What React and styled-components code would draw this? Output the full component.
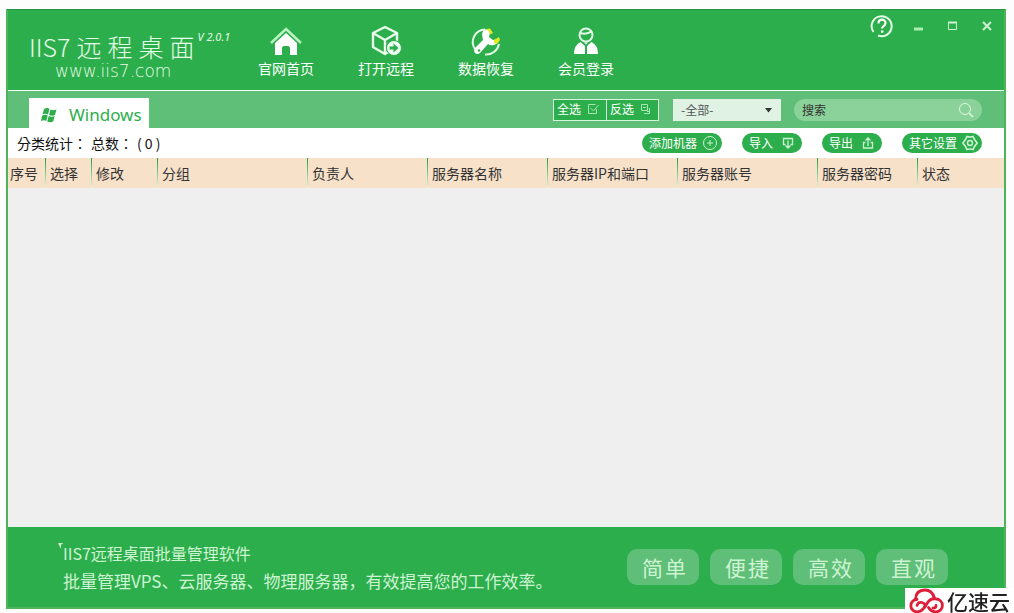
import React from 'react';
import styled, { createGlobalStyle } from 'styled-components';

const green = '#2dae4c';
const midGreen = '#5fbe77';
const paleGreen = '#cdf3d3';

const GlobalStyle = createGlobalStyle`
  * { box-sizing: border-box; }
  html, body, #root { height: 100%; }
  body {
    margin: 0;
    overflow: hidden;
    background: #fdfdfd;
    color: #222;
    font: 14px/20px "Noto Sans CJK SC", sans-serif;
  }
  button, input, select { font: inherit; color: inherit; margin: 0; }
  button { border: 0; padding: 0; background: none; cursor: pointer; }
`;

const Page = styled.div`
  height: 100%;
  padding: 9px 8px 4px 6px;
`;

const Window = styled.main`
  height: 100%;
  display: flex;
  flex-direction: column;
  border: 2px solid #4db45c;
  border-top: 1px solid #27903c;
  background: #efefef;
`;

const Header = styled.header`
  display: flex;
  height: 81px;
  flex: none;
  background: ${green};
  border-bottom: 1px solid #f2fff4;
  color: #fff;
`;

const Brand = styled.a`
  width: 228px;
  padding: 20px 0 0 21px;
  color: #e4fbe7;
  text-decoration: none;
`;

const BrandTop = styled.div`
  display: flex;
  align-items: flex-start;
`;

const BrandName = styled.span`
  display: flex;
  gap: 6px;
  font-size: 25px;
  line-height: 32px;
  font-weight: 300;
`;

const Version = styled.span`
  padding-left: 3px;
  font: italic 11px/14px "Noto Sans", sans-serif;
  white-space: nowrap;
`;

const Site = styled.div`
  padding-left: 26px;
  font: 17px/18px "DejaVu Sans", sans-serif;
  font-weight: 200;
`;

const Nav = styled.nav`
  display: flex;
  flex: 1;
`;

const NavLink = styled.a`
  width: 100px;
  padding-top: 14px;
  display: flex;
  flex-direction: column;
  align-items: center;
  color: #fff;
  text-decoration: none;
`;

const WindowControls = styled.div`
  display: flex;
  align-items: flex-start;
  gap: 12px;
  padding: 4px 6px 0 0;
`;

const ControlButton = styled.button`
  display: grid;
  place-items: center;
  width: 22px;
  height: 24px;
`;

const HelpButton = styled(ControlButton)`
  width: 24px;
  margin-right: 2px;
`;

const Toolbar = styled.div`
  display: flex;
  align-items: flex-start;
  flex: none;
  height: 37px;
  padding: 7px 22px 0 21px;
  background: ${midGreen};
`;

const Tab = styled.button`
  display: flex;
  align-items: center;
  gap: 12px;
  width: 120px;
  height: 30px;
  padding: 3px 0 0 12px;
  margin-right: auto;
  background: #fff;
  color: ${green};
  font: 17px/24px "Noto Sans", sans-serif;
`;

const PickGroup = styled.div`
  display: flex;
  padding-top: 1px;
`;

const PickButton = styled.button`
  display: flex;
  align-items: center;
  gap: 6px;
  width: 54px;
  height: 22px;
  padding: 0 3px 2px;
  background: ${green};
  border: 1px solid #d5f6da;
  color: #fff;
  font-size: 12px;
  line-height: 16px;

  & + & { border-left-width: 0; width: 52px; }
`;

const SelectBox = styled.div`
  display: grid;
  align-items: center;
  width: 108px;
  margin: 1px 13px 0 14px;

  & > * { grid-area: 1 / 1; }
  & > svg { justify-self: end; margin-right: 8px; pointer-events: none; }
`;

const Select = styled.select`
  appearance: none;
  width: 100%;
  height: 22px;
  padding: 0 8px;
  border: 0;
  border-radius: 0;
  background: #dff2e4;
  color: #555;
  font-size: 12px;
`;

const SearchBox = styled.div`
  display: flex;
  align-items: center;
  width: 188px;
  height: 22px;
  margin-top: 1px;
  padding: 0 8px;
  border-radius: 11px;
  background: #8bd19a;
`;

const SearchInput = styled.input`
  flex: 1;
  min-width: 0;
  height: 20px;
  padding: 0;
  border: 0;
  outline: 0;
  background: none;
  font-size: 12px;

  &::placeholder { color: #333; opacity: 1; }
`;

const StatsBar = styled.div`
  display: flex;
  align-items: center;
  gap: 20px;
  flex: none;
  height: 30px;
  padding: 0 22px 0 9px;
  background: #fff;
  color: #111;
`;

const Stats = styled.span`
  display: flex;
  gap: 4px;
  margin-right: auto;
  font-family: "Noto Sans CJK TC", "Noto Sans CJK SC", sans-serif;
`;

const Pill = styled.button`
  display: flex;
  align-items: center;
  justify-content: space-between;
  width: ${(p) => (p.$wide ? 80 : 60)}px;
  height: 20px;
  padding: 0 ${(p) => (p.$wide ? 4 : 7)}px 0 7px;
  border-radius: 10px;
  background: ${green};
  color: #fff;
  font-size: 12px;
  line-height: 20px;
`;

const Table = styled.table`
  flex: none;
  width: 100%;
  table-layout: fixed;
  border-spacing: 0;
`;

const HeadCell = styled.th`
  width: ${(p) => p.$width};
  height: 30px;
  padding: 0 0 0 ${(p) => (p.$first ? 2 : 5)}px;
  background: ${(p) => (p.$first ? 'none' : `linear-gradient(#1fa040, #7fcb8c 50%, #e4f3da) left top / 1px 100% no-repeat`)}, #f7e1c9;
  color: #333;
  font-weight: 400;
  text-align: left;
  white-space: nowrap;
`;

const Footer = styled.footer`
  display: flex;
  justify-content: space-between;
  flex: none;
  height: 80px;
  margin-top: auto;
  padding: 13px 56px 0 50px;
  background: ${green};
`;

const Intro = styled.div`
  display: flex;
  color: ${paleGreen};
  line-height: 27px;
  white-space: nowrap;
`;

const IntroTitle = styled.p`
  margin: 0;
  font-size: 16px;
`;

const IntroText = styled.p`
  margin: 0;
  font-size: 17px;
`;

const Badges = styled.div`
  display: flex;
  gap: 11px;
  padding-top: 9px;
`;

const Badge = styled.span`
  display: flex;
  align-items: center;
  justify-content: center;
  gap: 2px;
  width: 72px;
  height: 36px;
  padding-left: 2px;
  border-radius: 10px;
  background: ${midGreen};
  color: ${paleGreen};
  font-size: 21px;
  line-height: 36px;
`;

const Watermark = styled.div`
  position: fixed;
  right: 0;
  bottom: 0;
  display: flex;
  align-items: center;
  gap: 3px;
  width: 109px;
  height: 25px;
  padding-left: 4px;
  background: #fff;
  color: #222;
  font-size: 21px;
  line-height: 24px;
  font-weight: 500;
  white-space: nowrap;
`;

const Icon = ({ w = 14, h = w, box = `0 0 ${w} ${h}`, children }) => (
  <svg width={w} height={h} viewBox={box} fill="none" stroke="currentColor" aria-hidden="true">
    {children}
  </svg>
);

const HomeIcon = () => (
  <Icon w={34}>
    <path d="M2 19 17 5l15 14" stroke="#b9f3c0" strokeWidth="2.4" />
    <path d="M17 9 28 19v12h-7v-7q0-2-2-2h-4q-2 0-2 2v7H6V19z" fill="#fff" stroke="none" />
  </Icon>
);

const BoxIcon = () => (
  <Icon w={34}>
    <path d="M16 3 28 9v13l-12 8-12-7V9zM4 9l12 7 12-7M16 16v14" stroke="#e8fde9" strokeWidth="2.4" strokeLinejoin="round" />
    <circle cx="25" cy="24" r="7.5" fill="#eefeef" stroke={green} />
    <path d="M20.500 22.500h4v-3l5 4.500-5 4.500v-3h-4z" fill={green} stroke="none" />
  </Icon>
);

const WrenchIcon = () => (
  <Icon w={34}>
    <path d="M16 5.500A12.500 12.500 0 0 0 6 25M16 30.500A13 13 0 0 0 30 20" stroke="#e4fbe7" strokeWidth="2" />
    <path d="M15 6q4-2 6 2l-1 5 4 3 5-1q0 5-4 6-4 1-6-1l-8 9q-3 2-5 0-2-3 0-5l8-8q-2-8 1-10z" fill="#fff" stroke="none" />
    <path d="m17 5 4-.500 3 4.500-3 1.500-1-3zM25 16l5-3 1 3-3 4-3-1z" fill="#e3ea22" stroke="none" />
    <circle cx="10" cy="26.500" r="1.200" fill={green} stroke="none" />
  </Icon>
);

const MemberIcon = () => (
  <Icon w={34}>
    <circle cx="17" cy="11" r="6.500" stroke="#e4fbe7" strokeWidth="2" />
    <path d="M11 9q7 2 12-2" stroke="#e4fbe7" strokeWidth="2" />
    <path d="M11.500 18Q5 21 5 30h11V22zM22.500 18Q29 21 29 30H18V22z" fill="#fff" stroke="none" />
    <path d="m15 18.500 2 2 2-2z" fill="#fff" stroke="none" />
  </Icon>
);

const WindowsIcon = () => (
  <Icon w={16} h={16}>
    <g fill={green} stroke="none">
      <path d="M3 2q3-2 5.500 0L7 7.500Q4 6 1.500 7.500zM9.500 2.500Q12 4 15.500 2.500L14 8q-3 1.500-6 0zM1.200 8.500q3-1.500 5.500 0L5.300 14Q3 12.500 0 14zM7.700 9q3 1.500 6 0l-1.500 5.500q-3 1.500-6 0z" />
    </g>
  </Icon>
);

const navItems = [
  ['官网首页', HomeIcon],
  ['打开远程', BoxIcon],
  ['数据恢复', WrenchIcon],
  ['会员登录', MemberIcon],
];

const columns = [
  ['序号', '37px'],
  ['选择', '46px'],
  ['修改', '66px'],
  ['分组', '150px'],
  ['负责人', '120px'],
  ['服务器名称', '120px'],
  ['服务器IP和端口', '130px'],
  ['服务器账号', '140px'],
  ['服务器密码', '100px'],
  ['状态', 'auto'],
];

export default function App() {
  return (
    <Page>
      <GlobalStyle />
      <Window>
        <Header>
          <Brand href="#">
            <BrandTop>
              <BrandName>
                <span>IIS7</span>
                <span>远</span>
                <span>程</span>
                <span>桌</span>
                <span>面</span>
              </BrandName>
              <Version>V 2.0.1</Version>
            </BrandTop>
            <Site>www.iis7.com</Site>
          </Brand>
          <Nav>
            {navItems.map(([label, Glyph]) => (
              <NavLink href="#" key={label}>
                <Glyph />
                {label}
              </NavLink>
            ))}
          </Nav>
          <WindowControls>
            <HelpButton aria-label="帮助">
              <Icon w={24}>
                <path d="M3.500 18A10 10 0 1 1 8 21.500" stroke="#e4fbe7" strokeWidth="2" />
                <path d="M8.500 9.500c0-5 7-5 7-.5 0 3-3.500 3-3.500 5.500" stroke="#fff" strokeWidth="2.200" />
                <path d="M11 16.500h2.400v2.200H11z" fill="#fff" stroke="none" />
              </Icon>
            </HelpButton>
            <ControlButton aria-label="最小化">
              <Icon w={10}><path d="M0 8h9" stroke="#a9efb0" strokeWidth="3" /></Icon>
            </ControlButton>
            <ControlButton aria-label="最大化">
              <Icon w={10}><path d="M.5 1.500h8v7h-8z" stroke={paleGreen} /><path d="M0 1.500h9" stroke={paleGreen} strokeWidth="2" /></Icon>
            </ControlButton>
            <ControlButton aria-label="关闭">
              <Icon w={10}><path d="m1 1 8 8M9 1 1 9" stroke={paleGreen} strokeWidth="2" /></Icon>
            </ControlButton>
          </WindowControls>
        </Header>

        <Toolbar>
          <Tab>
            <WindowsIcon />
            Windows
          </Tab>
          <PickGroup>
            <PickButton>
              全选
              <Icon w={12}><path d="M9.500 6v4.500h-8v-9h7M3.500 5l3 3 5-6" stroke="#a6e6b0" /></Icon>
            </PickButton>
            <PickButton>
              反选
              <Icon w={12}><path d="M1.500 1.500h6v6h-6zM3 4.500h3M9.500 5v5.500H4M7 8.500h3" stroke="#a6e6b0" /></Icon>
            </PickButton>
          </PickGroup>
          <SelectBox>
            <Select aria-label="分组" defaultValue="all">
              <option value="all">-全部-</option>
            </Select>
            <Icon w={8} h={6}><path d="M0 1h7L3.500 5.500z" fill="#333" stroke="none" /></Icon>
          </SelectBox>
          <SearchBox>
            <SearchInput type="text" aria-label="搜索" placeholder="搜索" />
            <Icon w={16}><circle cx="7" cy="7" r="5.500" stroke="#dff8e3" /><path d="m11 11 4 4" stroke="#dff8e3" strokeWidth="1.500" /></Icon>
          </SearchBox>
        </Toolbar>

        <StatsBar>
          <Stats>
            <span>分类统计：</span>
            <span>总数：</span>
            <span>( 0 )</span>
          </Stats>
          <Pill $wide>
            添加机器
            <Icon w={16}><circle cx="8" cy="8" r="6.500" stroke={paleGreen} /><path d="M5 8h6M8 5v6" stroke={paleGreen} /></Icon>
          </Pill>
          <Pill>
            导入
            <Icon w={14}><path d="M4.500 8.500h-2v-6h9v6h-2M7 4.500V12M4.500 9.500 7 12l2.500-2.500" stroke={paleGreen} strokeWidth="1.300" /></Icon>
          </Pill>
          <Pill>
            导出
            <Icon w={14}><path d="M4.500 6.500h-2v5.500h9V6.500h-2M7 10V2M4.500 4.500 7 2l2.500 2.500" stroke={paleGreen} strokeWidth="1.300" /></Icon>
          </Pill>
          <Pill $wide>
            其它设置
            <Icon w={16}>
              <path d="M5 1.500q3 1 6 0l1.500 3L15.200 8l-2.700 3.500-1.500 3q-3-1-6 0l-1.500-3L.8 8l2.700-3.500z" stroke={paleGreen} strokeWidth="1.600" />
              <circle cx="8" cy="8" r="2.500" stroke={paleGreen} strokeWidth="1.400" />
            </Icon>
          </Pill>
        </StatsBar>

        <Table>
          <thead>
            <tr>
              {columns.map(([label, width], i) => (
                <HeadCell key={label} scope="col" $width={width} $first={i === 0}>{label}</HeadCell>
              ))}
            </tr>
          </thead>
        </Table>

        <Footer>
          <Intro>
            <Icon w={5} h={30}><path d="M0 3h5L3 5v4z" fill={paleGreen} stroke="none" /></Icon>
            <div>
              <IntroTitle>IIS7远程桌面批量管理软件</IntroTitle>
              <IntroText>批量管理VPS、云服务器、物理服务器，有效提高您的工作效率。</IntroText>
            </div>
          </Intro>
          <Badges>
            {['简单', '便捷', '高效', '直观'].map((word) => (
              <Badge key={word}>
                {[...word].map((c) => <span key={c}>{c}</span>)}
              </Badge>
            ))}
          </Badges>
        </Footer>
      </Window>
      <Watermark>
        <Icon w={35} h={25}>
          <g stroke="#dd1f38" strokeWidth="2.800" strokeLinecap="round">
            <path d="M6.500 11Q7 2 16 2q7 0 9.500 8" />
            <path d="M8 11.500a6 6 0 0 0 0 12.300c6 0 8-5 10-8.300s5-5.500 9-4.500a6.400 6.400 0 0 1 0 12.800q-5 0-7.500-4.300" />
            <path d="M8 17.500q1-4 5-3t2.500 4.500M27 17.500q0 3-3 2.500" />
          </g>
        </Icon>
        亿速云
      </Watermark>
    </Page>
  );
}
